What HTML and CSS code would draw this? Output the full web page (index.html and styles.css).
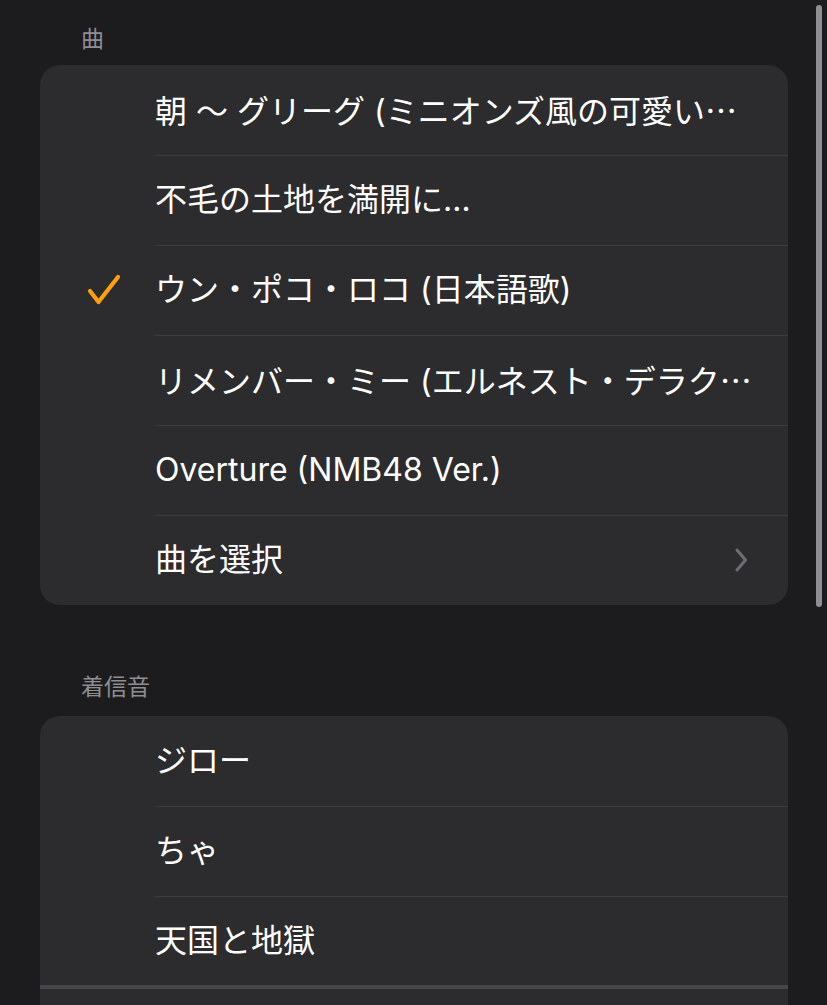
FILE: index.html
```html
<!DOCTYPE html>
<html lang="ja">
<head>
<meta charset="utf-8">
<link rel="stylesheet" href="styles.css">
</head>
<body>
<div class="page">
  <div class="section-title first">曲</div>
  <div class="card">
    <div class="row"><span class="mark"></span><span class="label">朝 〜 グリーグ (ミニオンズ風の可愛い<span class="cjk-ell">…</span></span></div>
    <div class="row"><span class="mark"></span><span class="label">不毛の土地を満開に…</span></div>
    <div class="row"><span class="mark">
      <svg width="34" height="32" viewBox="0 0 34 32"><path d="M3 17 L11.5 28 L31 3" fill="none" stroke="#ff9f0a" stroke-width="4.2" stroke-linecap="round" stroke-linejoin="round"/></svg>
    </span><span class="label">ウン・ポコ・ロコ (日本語歌)</span></div>
    <div class="row"><span class="mark"></span><span class="label">リメンバー・ミー (エルネスト・デラク<span class="cjk-ell">…</span></span></div>
    <div class="row"><span class="mark"></span><span class="label">Overture (NMB48 Ver.)</span></div>
    <div class="row"><span class="mark"></span><span class="label">曲を選択</span>
      <svg class="chev" width="14" height="26" viewBox="0 0 14 26"><path d="M3 3 L11.5 13 L3 23" fill="none" stroke="#6d6d72" stroke-width="3" stroke-linecap="round" stroke-linejoin="round"/></svg>
    </div>
  </div>
  <div class="section-title">着信音</div>
  <div class="card">
    <div class="row"><span class="mark"></span><span class="label">ジロー</span></div>
    <div class="row"><span class="mark"></span><span class="label">ちゃ</span></div>
    <div class="row last"><span class="mark"></span><span class="label">天国と地獄</span></div>
    <div class="row"><span class="mark"></span><span class="label"></span></div>
  </div>
</div>
<div class="scrollbar"></div>
</body>
</html>
```

FILE: styles.css
```css
html, body {
  margin: 0;
  padding: 0;
  background: #1c1c1e;
  height: 1005px;
  overflow: hidden;
}
body {
  font-family: "Noto Sans CJK JP", "Noto Sans", sans-serif;
  color: #ffffff;
}
.page {
  padding: 0 39px 0 40px;
}
.section-title {
  color: #8e8e93;
  font-size: 23px;
  line-height: 30px;
  padding: 65px 0 0 41px;
  height: 46px;
  box-sizing: content-box;
}
.section-title.first {
  padding-top: 22px;
  height: 43px;
}
.card {
  background: #2c2c2e;
  border-radius: 20px;
  overflow: hidden;
}
.row {
  display: flex;
  align-items: center;
  height: 90px;
  position: relative;
}
.row + .row::before {
  content: "";
  position: absolute;
  top: 0;
  left: 115px;
  right: 0;
  height: 1px;
  background: #3d3d41;
}
.row.last + .row::before {
  left: 0;
  height: 4px;
  top: -1px;
  background: #46464a;
}
.mark {
  width: 115px;
  display: flex;
  justify-content: flex-start;
  padding-left: 47px;
  box-sizing: border-box;
}
.label {
  font-family: "Inter", "Noto Sans CJK JP", sans-serif;
  font-size: 32px;
  line-height: 40px;
  white-space: nowrap;
  flex: 1;
}
.cjk-ell {
  font-family: "Noto Sans CJK JP", sans-serif;
}
.chev {
  margin-right: 40px;
}
.scrollbar {
  position: absolute;
  left: 816px;
  top: 5px;
  width: 6px;
  height: 602px;
  border-radius: 3px;
  background: #8e8e93;
}
```
